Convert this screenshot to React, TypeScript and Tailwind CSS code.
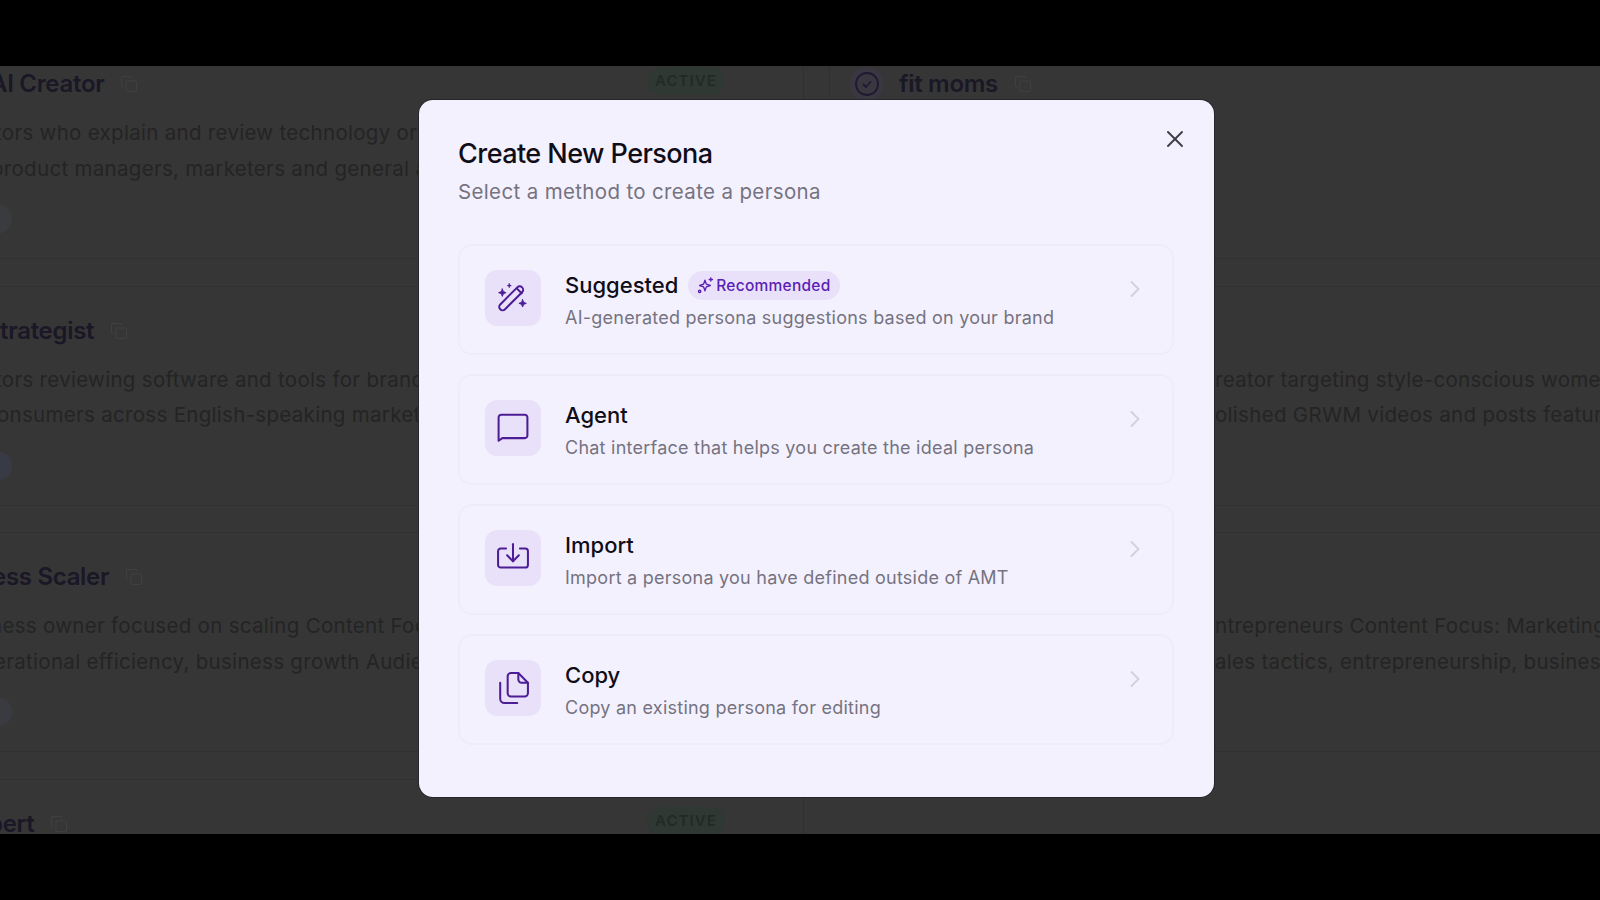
import { ChevronRight, Copy, X } from 'lucide-react'

const font = "font-['Inter',sans-serif]"

function WandIcon() {
    return (
        <svg width="32" height="32" viewBox="0 0 30 30" fill="none" stroke="#4c1d95" strokeWidth="1.9" strokeLinecap="round" strokeLinejoin="round">
            <rect x="-1" y="12" width="29" height="6.4" rx="3.2" transform="rotate(-45 13.500 15.500)" />
            <path d="M18.500 6l4.600 4.600" />
            <path d="M5 6.500l1 2.500 2.500 1-2.500 1-1 2.500-1-2.500-2.500-1 2.500-1z" fill="#4c1d95" strokeWidth="0.8" />
            <path d="M11.500 1.500l.5 1.400 1.400.5-1.400.5-.5 1.400-.5-1.400-1.400-.5 1.400-.5z" fill="#4c1d95" strokeWidth="0.6" />
            <path d="M24 16.500l1 2.500 2.500 1-2.500 1-1 2.500-1-2.500-2.500-1 2.500-1z" fill="#4c1d95" strokeWidth="0.8" />
        </svg>
    )
}

function ChatIcon() {
    return (
        <svg width="32" height="32" viewBox="0 0 30 30" fill="none" stroke="#4c1d95" strokeWidth="1.9" strokeLinecap="round" strokeLinejoin="round">
            <path d="M1.500 27V5A2.500 2.500 0 0 1 4 2.500h22A2.500 2.500 0 0 1 28.500 5v17a2.500 2.500 0 0 1-2.500 2.500H5z" />
        </svg>
    )
}

function ImportIcon() {
    return (
        <svg width="32" height="32" viewBox="0 0 30 30" fill="none" stroke="#4c1d95" strokeWidth="1.9" strokeLinecap="round" strokeLinejoin="round">
            <path d="M8.500 6H3.500A2.500 2.500 0 0 0 1 8.500v13A2.500 2.500 0 0 0 3.500 24h23a2.500 2.500 0 0 0 2.500-2.500v-13A2.500 2.500 0 0 0 26.500 6H21.500" />
            <path d="M15 2v16" />
            <path d="M9.500 12.500L15 18l5.500-5.500" />
        </svg>
    )
}

function CopyIcon() {
    return (
        <svg width="32" height="32" viewBox="0 0 30 30" fill="none" stroke="#4c1d95" strokeWidth="1.9" strokeLinecap="round" strokeLinejoin="round">
            <path d="M10 4v16a3 3 0 0 0 3 3h13a3 3 0 0 0 3-3V10l-9-9h-7a3 3 0 0 0-3 3z" />
            <path d="M20 1v6a3 3 0 0 0 3 3h6" />
            <path d="M3 10v15a4 4 0 0 0 4 4h12" />
        </svg>
    )
}

function SparkBadgeIcon() {
    return (
        <svg width="17" height="17" viewBox="0 0 16 16" fill="none" stroke="#5b21b6" strokeWidth="1.3" strokeLinecap="round" strokeLinejoin="round">
            <path d="M7.500 3l1.300 3.700 3.700 1.300-3.700 1.300-1.300 3.700-1.300-3.700L2.500 8l3.700-1.300z" />
            <path d="M13 .8v3M11.500 2.300h3" />
            <circle cx="2.500" cy="13.500" r="1.100" />
        </svg>
    )
}

function BgLine({ text, pad }: { text: string; pad: string }) {
    return <p className={`h-[35.5px] whitespace-nowrap text-[20.500px] leading-[35.5px] tracking-[0.3px] text-[#242424] ${pad}`}>{text}</p>
}

function BgPill({ color }: { color: string }) {
    return <div className={`mt-[18px] h-[30px] w-[40px] -ml-[28px] rounded-full ${color}`} />
}

function CopyMark({ className }: { className: string }) {
    return <Copy size={18} strokeWidth={1.5} className={`text-[#404040] ${className}`} />
}

function ActiveBadge() {
    return (
        <span className="absolute left-[647px] top-[27px] rounded-full bg-[#2f3833] px-[8px] py-[3px] text-[15px] font-semibold leading-[22px] tracking-[1.1px] text-[#1f2c26]">
            ACTIVE
        </span>
    )
}

const leftCards = [
    { title: 'AI Creator', titlePad: '-ml-[10px]', lines: ['tors who explain and review technology or', 'product managers, marketers and general a'], linePads: ['-ml-[5px]', '-ml-[9px]'], pill: 'bg-[#3a3b3e]', badge: true },
    { title: 'trategist', titlePad: 'ml-0', lines: ['tors reviewing software and tools for brand', 'onsumers across English-speaking market'], linePads: ['-ml-[5px]', '-ml-[3px]'], pill: 'bg-[#383b46]', badge: false },
    { title: 'ess Scaler', titlePad: '-ml-[8px]', lines: ['ness owner focused on scaling Content Foc', 'erational efficiency, business growth Audie'], linePads: ['-ml-[10px]', '-ml-[6px]'], pill: 'bg-[#393b41]', badge: false },
    { title: 'pert', titlePad: '-ml-[12px]', lines: [], linePads: [], pill: '', badge: true },
]

const rightLines = [
    [],
    ['reator targeting style-conscious women', 'olished GRWM videos and posts featuring'],
    ['ntrepreneurs Content Focus: Marketing', 'ales tactics, entrepreneurship, business'],
]

const methods = [
    { name: 'Suggested', desc: 'AI-generated persona suggestions based on your brand', icon: <WandIcon />, badge: true },
    { name: 'Agent', desc: 'Chat interface that helps you create the ideal persona', icon: <ChatIcon />, badge: false },
    { name: 'Import', desc: 'Import a persona you have defined outside of AMT', icon: <ImportIcon />, badge: false },
    { name: 'Copy', desc: 'Copy an existing persona for editing', icon: <CopyIcon />, badge: false },
]

export default function App() {
    return (
        <div className={`flex h-screen flex-col overflow-hidden bg-black ${font}`}>
            <div className="h-[66px] shrink-0 bg-black" />

            <div className="relative flex flex-1 overflow-hidden bg-[#363636]">
                {/* list behind the dialog */}
                <div className="-mt-[27px] flex w-[804px] shrink-0 flex-col gap-[26.67px] overflow-hidden border-r border-[#303030]">
                    {leftCards.map((card) => (
                        <div key={card.title} className="relative h-[220px] shrink-0 border-y border-[#303030] pt-[26px]">
                            <div className={`flex h-[36px] items-center gap-[16px] ${card.titlePad}`}>
                                <h3 className="whitespace-nowrap text-[24px] font-semibold tracking-[-0.3px] text-[#1a1726]">{card.title}</h3>
                                <CopyMark className="" />
                            </div>
                            {card.badge && <ActiveBadge />}
                            <div className="mt-[13px]">
                                {card.lines.map((line, i) => (
                                    <BgLine key={line} text={line} pad={card.linePads[i]} />
                                ))}
                            </div>
                            {card.pill && <BgPill color={card.pill} />}
                        </div>
                    ))}
                </div>

                <div className="-mt-[27px] ml-[25px] flex flex-1 flex-col gap-[26.67px] overflow-hidden">
                    {rightLines.map((lines, i) => (
                        <div key={i} className="h-[220px] shrink-0 border-y border-l border-[#303030] pt-[26px]">
                            {i === 0 ? (
                                <div className="flex h-[36px] items-center pl-[20px]">
                                    <span className="flex h-[34px] w-[34px] items-center justify-center rounded-full bg-[#3a3740]">
                                        <svg width="26" height="26" viewBox="0 0 26 26" fill="none" stroke="#1d1a33" strokeWidth="1.8" strokeLinecap="round" strokeLinejoin="round">
                                            <circle cx="13" cy="13" r="11" />
                                            <path d="M9.500 13.500l2.500 2.500 4.500-5" />
                                        </svg>
                                    </span>
                                    <h3 className="ml-[15px] whitespace-nowrap text-[24px] font-semibold tracking-[-0.3px] text-[#1a1726]">fit moms</h3>
                                    <CopyMark className="ml-[16px]" />
                                </div>
                            ) : (
                                <div className="mt-[49px]">
                                    {lines.map((line) => (
                                        <BgLine key={line} text={line} pad="pl-[385px]" />
                                    ))}
                                </div>
                            )}
                        </div>
                    ))}
                </div>

                {/* dialog */}
                <div className="absolute left-[419px] top-[34px] flex h-[697px] w-[795px] flex-col rounded-[14px] bg-[#f4f1ff] pl-[39px] pr-[40px] pt-[34px] shadow-[0_0_0_1px_#26262c]">
                    <button className="absolute right-[25px] top-[25px] text-[#3f3e46]">
                        <X size={28} strokeWidth={1.7} />
                    </button>
                    <h2 className="mt-[1px] text-[27px] font-medium leading-[38px] tracking-[-0.55px] text-[#0f0d18]">Create New Persona</h2>
                    <p className="mt-[1px] text-[20.500px] leading-[36px] tracking-[0.35px] text-[#75737f]">Select a method to create a persona</p>

                    <div className="mt-[34px] flex flex-col gap-[19px]">
                        {methods.map((m) => (
                            <div key={m.name} className="flex h-[111px] items-center rounded-[14px] border-2 border-[#efecf9] pl-[25px] pr-[23px]">
                                <div className="-mt-[3px] flex h-[56px] w-[56px] shrink-0 items-center justify-center rounded-[12px] bg-[#e9e1fa]">{m.icon}</div>
                                <div className="ml-[24px] min-w-0 flex-1 pt-[2px]">
                                    <div className="mt-[2px] flex h-[30px] items-center">
                                        <span className="text-[22px] font-medium tracking-[0px] text-[#0f0d18]">{m.name}</span>
                                        {m.badge && (
                                            <span className="ml-[10px] flex h-[29px] items-center gap-[2px] rounded-full bg-[#e9e1fa] pl-[9px] pr-[9px] text-[15.500px] font-medium tracking-[0.25px] text-[#5b21b6]">
                                                <SparkBadgeIcon />
                                                Recommended
                                            </span>
                                        )}
                                    </div>
                                    <p className="mt-[2px] text-[18px] leading-[30px] tracking-[0.24px] text-[#75737f]">{m.desc}</p>
                                </div>
                                <ChevronRight size={28} strokeWidth={1.6} className="-mt-[22px] shrink-0 text-[#d3d0dc]" />
                            </div>
                        ))}
                    </div>
                </div>
            </div>

            <div className="h-[66px] shrink-0 bg-black" />
        </div>
    )
}
